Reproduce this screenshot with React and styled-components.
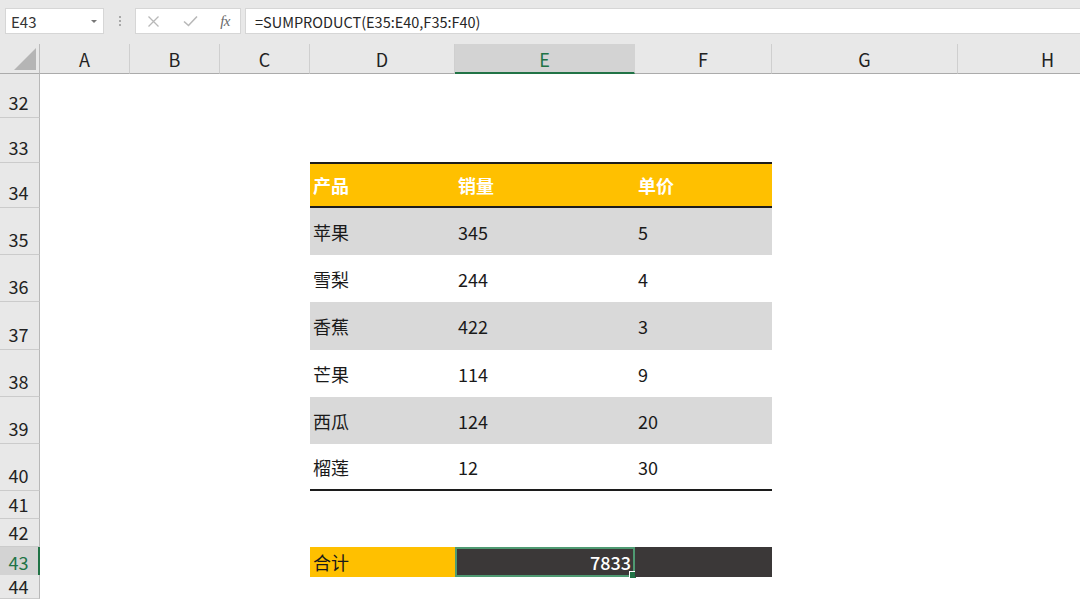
import React from "react";
import styled, { createGlobalStyle, css } from "styled-components";

const FONT = `"Noto Sans CJK SC", "Noto Sans", sans-serif`;
const GREEN = "#217346";
const COLS = "40px 90px 90px 90px 145px 180px 137px 186px 180px";

const Global = createGlobalStyle`
  html, body { margin: 0; padding: 0; background: #ffffff; overflow: hidden; }
  body { font-family: ${FONT}; }
  * { box-sizing: border-box; }
`;

const Page = styled.div`
  width: 1080px;
  height: 599px;
  overflow: hidden;
  display: flex;
  flex-direction: column;
  background: #fff;
`;

const Toolbar = styled.div`
  flex: none;
  height: 44px;
  background: #e8e8e8;
  display: flex;
  align-items: flex-start;
  padding: 8px 0 0 5px;
`;

const Box = styled.div`
  height: 26px;
  background: #fff;
  border: 1px solid #d6d6d6;
  display: flex;
  align-items: center;
  font-size: 15px;
  color: #333;
`;

const NameBox = styled(Box)`
  width: 99px;
  padding: 0 6px 0 5px;
  justify-content: space-between;
`;

const Caret = styled.span`
  width: 0;
  height: 0;
  border-left: 3px solid transparent;
  border-right: 3px solid transparent;
  border-top: 3px solid #777;
  margin-top: 1px;
`;

const Grip = styled.div`
  width: 31px;
  height: 26px;
  display: flex;
  flex-direction: column;
  align-items: center;
  justify-content: center;
  gap: 2px;
  & > span {
    width: 2px;
    height: 2px;
    background: #a8a8a8;
  }
`;

const FxBox = styled(Box)`
  width: 106px;
  padding: 0 10px 0 11px;
  justify-content: space-between;
`;

const FxMark = styled.span`
  font-family: "Liberation Serif", "DejaVu Serif", serif;
  font-style: italic;
  font-size: 15px;
  color: #6a6a6a;
  letter-spacing: -0.5px;
`;

const FormulaBox = styled(Box)`
  flex: 1;
  margin-left: 4px;
  padding-left: 9px;
  border-right: none;
  font-size: 14.5px;
  color: #262626;
`;

const Row = styled.div`
  display: grid;
  grid-template-columns: ${COLS};
  height: ${(p) => p.$h}px;
  flex: none;
`;

const HeaderRow = styled(Row)`
  background: #e8e8e8;
`;

const Corner = styled.div`
  position: relative;
  border-right: 1px solid #bcbcbc;
  border-bottom: 1px solid #ababab;
  &::after {
    content: "";
    position: absolute;
    right: 3px;
    bottom: 3px;
    width: 0;
    height: 0;
    border-left: 22px solid transparent;
    border-bottom: 22px solid #b5b5b5;
  }
`;

const ColHead = styled.div`
  display: flex;
  align-items: center;
  justify-content: center;
  font-size: 18px;
  color: #222;
  border-right: 1px solid #cfcfcf;
  border-bottom: 1px solid #ababab;
  padding-top: 1px;
  ${(p) =>
    p.$sel &&
    css`
      background: #d3d3d3;
      color: ${GREEN};
      border-bottom: 2px solid ${GREEN};
      border-right-color: #d3d3d3;
    `}
`;

const RowHead = styled.div`
  display: flex;
  align-items: flex-end;
  justify-content: center;
  padding: 0 2px ${(p) => p.$pb ?? 4}px 0;
  font-size: 18px;
  line-height: 22px;
  color: #222;
  background: #e8e8e8;
  border-right: 1px solid #b8b8b8;
  border-bottom: 1px solid #cbcbcb;
  ${(p) =>
    p.$sel &&
    css`
      background: #d3d3d3;
      color: ${GREEN};
      border-right: 2px solid ${GREEN};
      padding-right: 1px;
    `}
`;

const Blank = styled.div``;

const Cell = styled.div`
  position: relative;
  display: flex;
  align-items: center;
  padding: 0 4px 0 3px;
  font-size: 18px;
  color: #1a1a1a;
  white-space: nowrap;
  background: ${(p) => p.$bg || "transparent"};
  ${(p) =>
    p.$head &&
    css`
      color: #fff;
      font-weight: 700;
      border-top: 2px solid #1c1c1c;
      border-bottom: 2px solid #1c1c1c;
      margin-top: -1px;
    `}
  ${(p) =>
    p.$last &&
    css`
      border-bottom: 2px solid #1c1c1c;
    `}
  ${(p) =>
    p.$right &&
    css`
      justify-content: flex-end;
    `}
`;

const Selected = styled(Cell)`
  color: #fff;
  font-weight: 500;
  border: 2px solid #4f9a72;
  padding-right: 2px;
  &::after {
    content: "";
    position: absolute;
    right: -4px;
    bottom: -4px;
    width: 6px;
    height: 6px;
    background: ${GREEN};
    border: 1px solid #fff;
  }
`;

const YELLOW = "#ffc000";
const GRAY = "#d9d9d9";
const DARK = "#3b3838";

const data = [
  ["苹果", "345", "5"],
  ["雪梨", "244", "4"],
  ["香蕉", "422", "3"],
  ["芒果", "114", "9"],
  ["西瓜", "124", "20"],
  ["榴莲", "12", "30"],
];

const colLetters = ["A", "B", "C", "D", "E", "F", "G", "H"];

function Pad({ n }) {
  return Array.from({ length: n }).map((_, i) => <Blank key={i} />);
}

export default function App() {
  const dataHeights = [47, 47, 48, 47, 47, 47];
  return (
    <Page>
      <Global />
      <Toolbar>
        <NameBox>
          <span>E43</span>
          <Caret />
        </NameBox>
        <Grip>
          <span />
          <span />
          <span />
        </Grip>
        <FxBox>
          <svg width="13" height="13" viewBox="0 0 13 13">
            <path d="M1.5 1.5 L11.5 11.5 M11.5 1.5 L1.5 11.5" stroke="#b8b8b8" strokeWidth="1.3" fill="none" />
          </svg>
          <svg width="15" height="12" viewBox="0 0 15 12">
            <path d="M1 6.5 L5.5 10.5 L14 1.5" stroke="#b8b8b8" strokeWidth="1.6" fill="none" />
          </svg>
          <FxMark>fx</FxMark>
        </FxBox>
        <FormulaBox>=SUMPRODUCT(E35:E40,F35:F40)</FormulaBox>
      </Toolbar>

      <HeaderRow $h={30}>
        <Corner />
        {colLetters.map((c) => (
          <ColHead key={c} $sel={c === "E"}>
            {c}
          </ColHead>
        ))}
      </HeaderRow>

      <Row $h={44}>
        <RowHead>32</RowHead>
      </Row>
      <Row $h={45}>
        <RowHead>33</RowHead>
      </Row>
      <Row $h={45}>
        <RowHead>34</RowHead>
        <Pad n={3} />
        <Cell $bg={YELLOW} $head>产品</Cell>
        <Cell $bg={YELLOW} $head>销量</Cell>
        <Cell $bg={YELLOW} $head>单价</Cell>
      </Row>
      {data.map((r, i) => {
        const bg = i % 2 === 0 ? GRAY : "transparent";
        const last = i === data.length - 1;
        return (
          <Row key={r[0]} $h={dataHeights[i]}>
            <RowHead>{35 + i}</RowHead>
            <Pad n={3} />
            <Cell $bg={bg} $last={last}>{r[0]}</Cell>
            <Cell $bg={bg} $last={last}>{r[1]}</Cell>
            <Cell $bg={bg} $last={last}>{r[2]}</Cell>
          </Row>
        );
      })}
      <Row $h={28}>
        <RowHead $pb={3}>41</RowHead>
      </Row>
      <Row $h={28}>
        <RowHead $pb={3}>42</RowHead>
      </Row>
      <Row $h={28}>
        <RowHead $pb={3} $sel>43</RowHead>
        <Pad n={3} />
        <Cell $bg={YELLOW}>合计</Cell>
        <Selected $bg={DARK} $right>7833</Selected>
        <Cell $bg={DARK} />
      </Row>
      <Row $h={24}>
        <RowHead $pb={1}>44</RowHead>
      </Row>
    </Page>
  );
}
